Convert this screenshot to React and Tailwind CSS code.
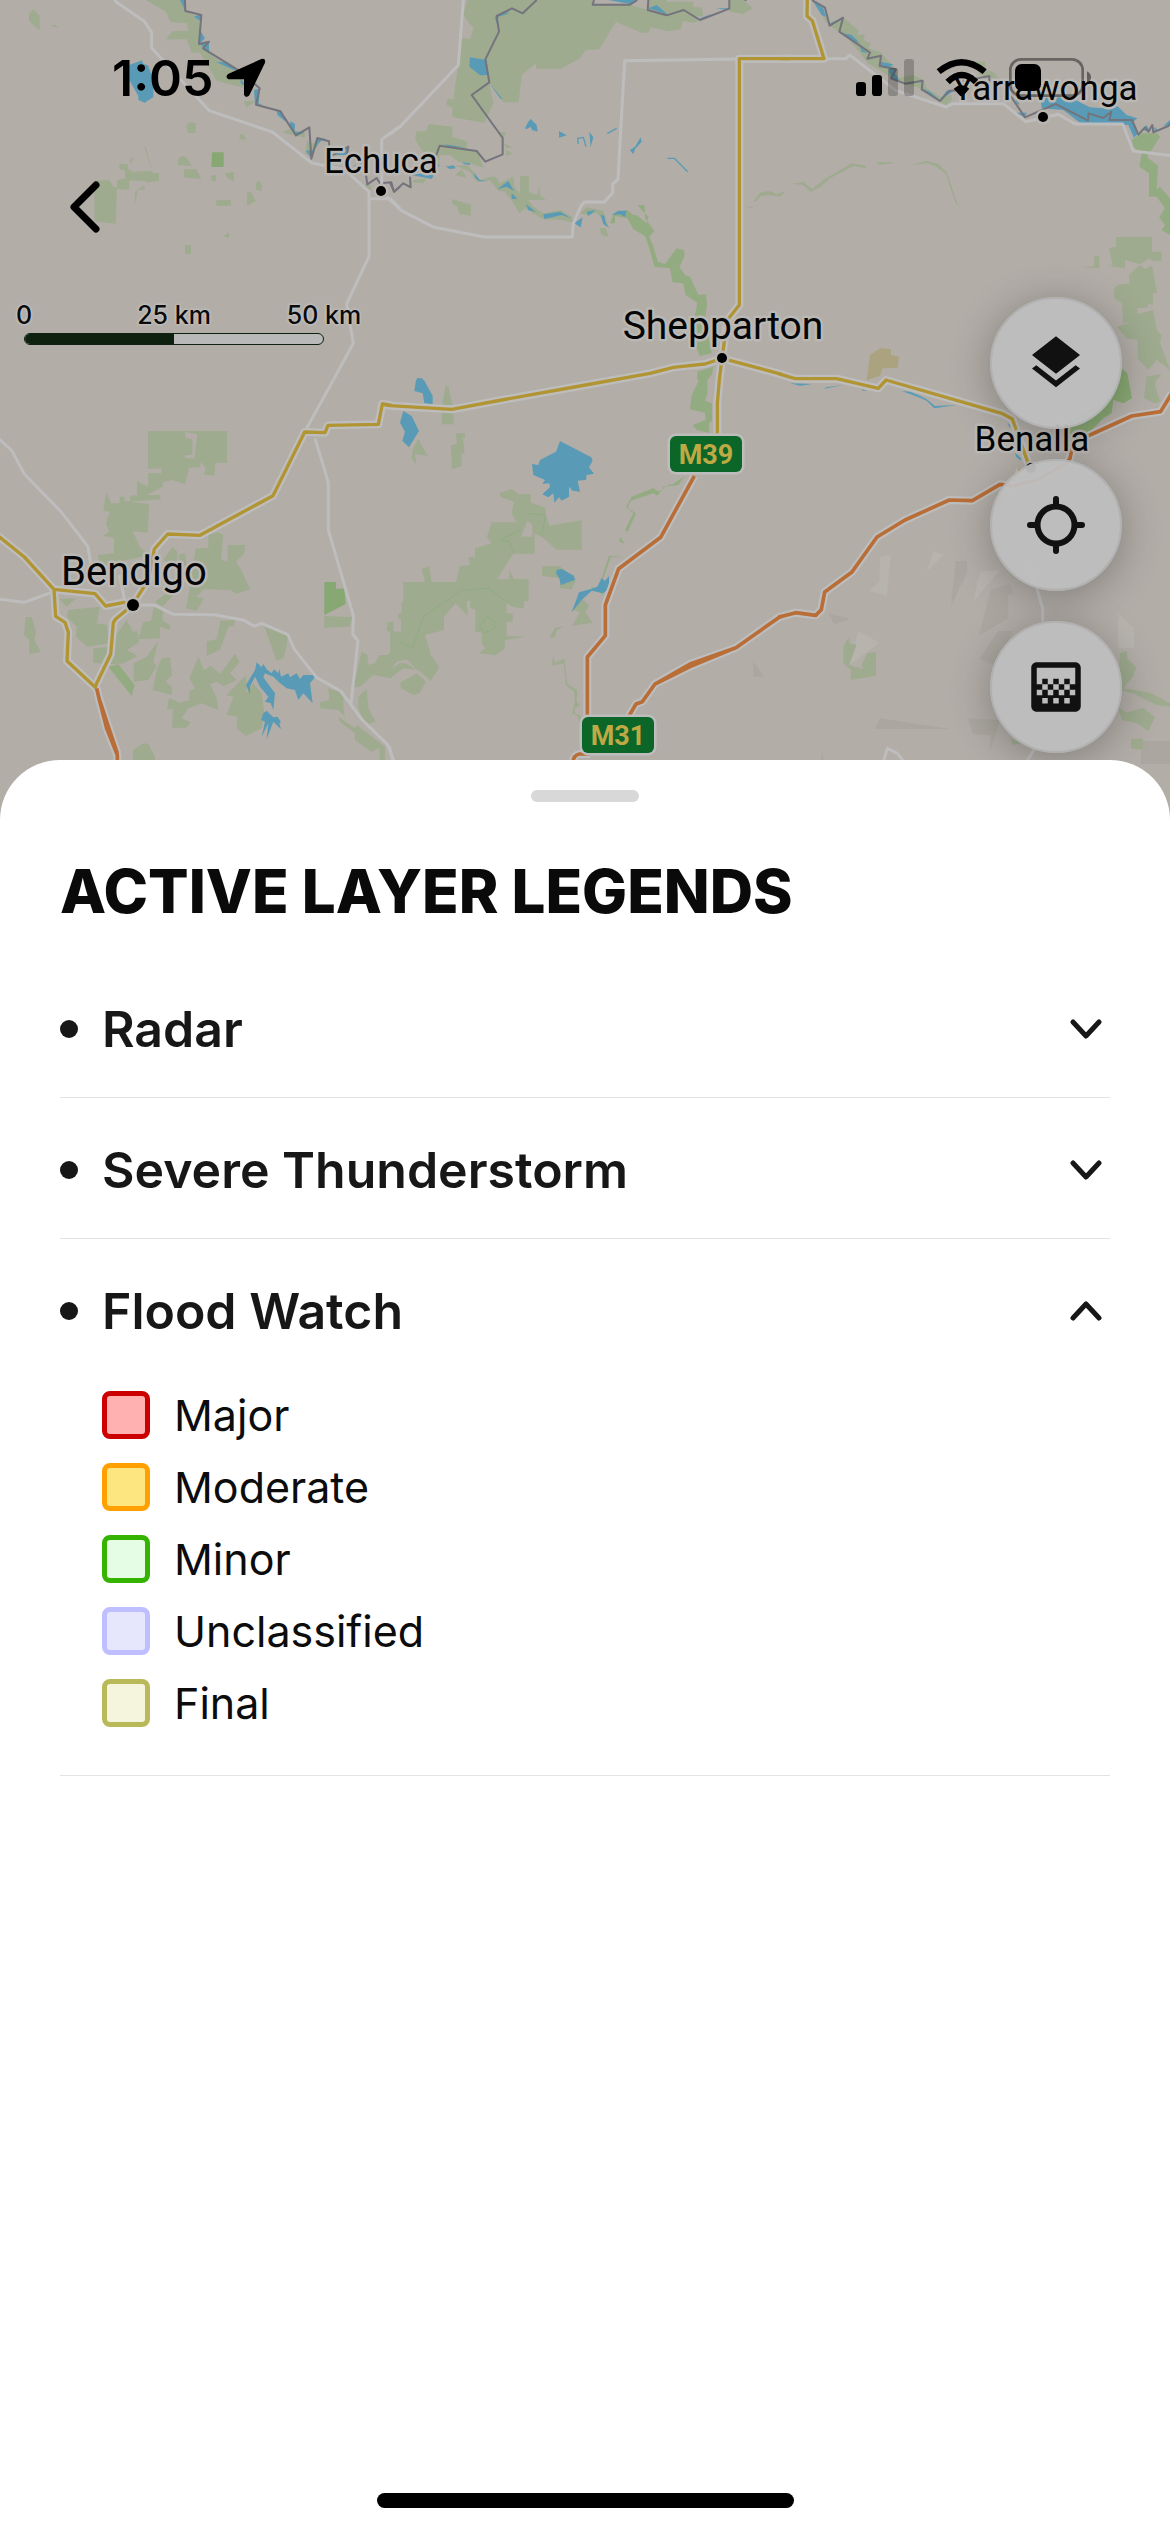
import { useState } from "react";
import { MdLayers, MdGradient } from "react-icons/md";

// Each tile is drawn on its own grid, three units to one map pixel.
const TILES = [
  {
    x: 0, y: 0,
    green: "M438 0L498 35L512 67L560 70L566 92L520 93L497 118L560 118L575 157L600 158L650 242L730 263L730 225L690 200L640 170L600 130L598 50L555 35L550 0ZM100 27L88 40L87 62L119 91L119 48ZM153 77L165 74L176 83ZM558 378L569 367L587 370V398L565 399ZM719 404L727 401L740 419L719 418ZM534 476L545 468L560 473L576 497L534 496ZM552 507L590 508L603 537L552 532ZM634 527L648 525V543H634ZM675 520L702 515V543L682 535ZM768 548L777 542L785 555V574L768 569ZM741 577L753 575L767 604L741 618ZM649 600H693V617H649ZM669 709L687 696V713ZM555 735H573V762H555ZM282 541H328L340 560L351 563L347 671L284 664ZM351 540L375 535L374 510L358 508V492L383 493L384 508L396 511L393 517L430 514L456 514L433 440L437 440L458 518L477 520V543L438 548L436 543L388 541L387 569L351 568ZM388 480L398 470L396 494ZM404 577L412 570L434 555V567L412 571L407 613ZM732 303L765 304L740 323ZM849 398L862 388L915 399V413ZM930 430L922 420L915 460L935 470L960 425ZM1090 560L1105 545L1115 565L1105 575Z",
    dark: "M636 457H671V501H634Z",
    water: "M388 195L426 181L430 192L444 196L460 240V291L434 308L415 300V288L388 240ZM540 0L555 0V30ZM582 50L602 42L600 62ZM598 88L615 115L600 130ZM600 132L627 125V155L612 145ZM648 186L680 187L715 215L690 205ZM722 235L740 262L722 250ZM762 270L780 265L776 310L788 314L765 314ZM830 328L845 333L858 365L832 345ZM872 364L885 372L884 395L915 395L905 402L885 404L868 380ZM930 470L918 452L940 450L950 415L975 415L955 430ZM1000 465L1045 445L1040 465ZM1060 497L1090 488L1075 502Z",
    border: "M555 0L556 33L604 45L597 132L627 125L609 145L722 215L779 265L768 314L841 334L888 406L928 382L934 476L952 414L987 424L990 470L1045 440L1035 500M1098 525L1102 553L1130 534L1140 550L1174 547L1182 575L1200 560",
    road: "M343 0L354 10L432 63L455 97V144L628 332L817 396L934 488L1035 510L1107 575V769L1040 912L1060 1030L1000 1140M1107 596H1170L1200 625M1145 560V419L1200 378",
  },
  {
    x: 390, y: 0,
    green: "M232 0H440L398 40L366 25L320 48L327 95L286 178L297 245L310 310L283 368L187 352V325L168 312L175 295L190 300L215 115L240 117L250 85L220 45ZM440 0H608V14H720L773 30L830 46L881 30L930 60L912 68L877 63L873 88L835 94L783 82L775 98H754L678 65L628 148L586 151L570 175L512 206H438V190L395 225L386 307H340L297 247L286 178L327 95L320 48L366 25L398 40ZM773 0H830V5H910V22H935L940 48L910 50L881 30L830 46L773 30ZM1018 0H1060L1088 25L1060 42L1020 35ZM118 372L187 380L186 410L233 425L230 447L262 453L280 503L240 490L205 485L180 465L150 465L145 500L95 450L76 420L78 395L108 393ZM324 395L348 397L340 420ZM340 430L366 440L350 445ZM348 450L367 460L348 469ZM196 525L215 508L230 535ZM187 597L243 614V647L208 642L202 620L185 610ZM70 540L110 535L100 550L70 548ZM145 500L230 495L255 520L265 543L300 530H316L330 550L370 530L372 560L390 580V528H417V577L440 585L450 562V585L467 600H415L430 620L460 640L510 630L545 650L553 670L520 660L460 658L405 625L388 640L365 600L345 575L325 572L300 540L260 545L240 515L205 500ZM570 640L590 622L640 632L655 680L640 660L620 638L590 645ZM628 685L648 685L655 710L635 705ZM1090 605L1110 578L1138 572L1160 583L1187 574L1170 590L1140 585L1112 588L1100 604ZM1065 618L1088 622V627Z",
    mid: "M660 670L672 640L712 630L730 645L740 645L770 670L775 650L742 616H764L765 655L793 692L778 710L790 740L803 785L825 792L860 745L882 750L884 768L868 800L885 825L900 830L925 885L948 883L951 915L945 955L965 1060L930 1068L920 1045L915 945L922 908L887 885L880 850L848 847L840 805L793 800L780 750L765 708L730 688L712 655L675 648V670ZM922 1115L970 1100L965 1125L950 1140H922Z",
    water: "M240 172L290 180L296 225L270 226L238 200ZM298 250L338 298L330 295ZM320 48L357 35L352 42L325 50L322 75L314 52ZM405 385L415 365L422 357L440 375L443 395L428 390L434 405L422 380L410 388ZM507 393L530 406L507 413ZM598 395L610 412L602 442ZM752 412L755 425L735 447L730 463L720 450L735 440ZM160 432L230 443L180 440ZM168 500L190 496L197 505L180 507ZM215 487L240 490V495L222 492ZM252 518L270 540L293 544H268L255 533ZM322 568L355 543L372 573L350 560ZM365 580L382 597H365ZM408 612L438 636L415 630ZM460 643L510 635L543 655L515 645L463 657ZM553 670L578 652L572 682ZM590 635L617 630L595 648ZM632 643L643 648L647 668L658 684L640 672ZM665 645L685 632L710 632L705 650L690 643ZM775 25L800 15L835 45L800 32ZM930 55L965 42L935 60ZM975 25H1018L1015 30ZM655 0H740L720 12ZM80 1135H98V1142H80ZM65 525L100 520L150 492L125 537Z",
    stream: "M565 432L563 415L580 412L588 440M652 400L680 385M832 475H853L893 515",
    border: "M440 0L398 40L366 25L320 48L327 95L286 178L298 247L245 285L338 414V463L286 485L260 453L149 437L130 490M60 530L62 562L40 550L12 575L0 548M612 0L608 14H720L742 0M775 0L773 30L830 46L881 30L930 60L1018 26V0M1058 -4L1070 1",
    road: "M220 0L205 195L30 380L0 403M-10 590L0 600L33 631L132 682L283 711H547L550 670L573 618L583 606H643L668 578V552L684 538L704 182L1048 177",
    yellow: "M1200 176H1048V915L1012 960L996 1075",
  },
  {
    x: 780, y: 0,
    green: "M95 0L130 40L150 70L190 52L236 92L232 105L255 103L250 120L272 130L265 145L300 155L345 205L355 235L400 225L430 240L440 265L480 290L515 285V300L498 315L470 300L420 265L375 250L330 230L265 190L200 110L145 75ZM580 185H615V210L640 215L660 240L600 225ZM36 551L70 547L97 567L130 540L215 490L258 497V505L220 498L150 535L122 560L92 576L70 555ZM292 487L340 486V490L295 495ZM390 495L440 483L475 492L500 517L510 545L532 612L557 628L528 612L505 545L500 525L470 500L445 490ZM0 580L16 573L0 587ZM1008 711H1116V755H1145V782H1115L1110 775L1080 793L1035 780V805L988 798L998 795L987 743L1008 742ZM1046 825L1080 795L1095 808L1116 797L1131 878L1118 880L1120 915L1103 912L1105 922L1070 925L1073 942L1120 930L1130 990L1145 1005L1140 1030L1170 1110L1130 1080L1105 1110L1073 1075V1020L1040 1015L1010 980L1060 965L1030 970L1026 910L1003 895V865L1013 855L1050 850ZM909 803L943 798L942 770L958 766V804ZM1100 1130L1145 1122L1130 1140H1100Z",
    mid: "M1056 420L1085 400L1130 400L1140 410L1115 450L1102 460L1104 475L1134 497L1130 570L1140 560L1170 595V705L1145 690L1155 675L1138 652L1155 625L1130 590H1107V520L1078 500L1085 460L1060 440Z",
    olive: "M270 1065L300 1045L333 1047V1065L357 1070L353 1104L308 1105L300 1128L260 1140Z",
    water: "M782 295L870 290L905 310L930 322L970 325L1012 318L1040 345L1072 355L1060 365L1075 400L1062 413L1045 375L900 368L850 330L785 325ZM97 0L130 25L138 50L125 45ZM145 72L185 55L160 70ZM190 100L215 105L240 130L215 120ZM240 140L262 160L245 155ZM300 185L340 193L330 200L350 208L345 220L358 242L335 235L325 205L300 195ZM425 265L450 275L480 300L465 297ZM480 300L500 272L525 270ZM700 285L720 315L712 312ZM708 338H740L735 352ZM1085 390L1100 375L1110 395ZM1125 380L1132 390L1122 392ZM1150 378L1170 360V375Z",
    border: "M95 0L135 23L149 77L189 53L178 95L270 158L262 176L303 167L299 198L348 208L333 235L375 251L428 242L425 268L480 303L508 272L545 270M545 245L628 228V245M690 285L735 352L827 312L924 362L926 340L970 354L994 335L988 360L1056 360L1075 404L1095 382L1105 395L1117 375L1120 397L1165 378L1175 365",
    road: "M132 176H198L209 165L348 272L498 321L520 311H670L737 365L835 343L886 372H1028L1060 453L1175 467",
    yellow: "M82 -5L81 48L97 62L132 176H0",
  },
  {
    x: 0, y: 380,
    green: "M444 153H681V248L695 247L646 250L643 287L612 284L618 263L601 247V261L568 263L555 312L518 300L488 306V320L440 345L481 345L481 358L390 365L447 372L443 458L398 454L410 480L422 505L450 525L380 540L300 560L293 525L342 520V475L310 467L328 455L318 430L330 395L310 392L319 337L333 370H358L360 350H374V364H390V348L411 345V303L444 320V280H485V265L444 266ZM587 506L625 503V465L655 457L670 464L663 540L683 545V496L735 495L733 520L708 545L718 560L751 628L710 641L692 630L610 628L590 650L612 655L590 692L558 685L565 650ZM517 500L532 515L530 560L490 540ZM465 665L505 635L520 645L487 680ZM462 680L488 690V722L512 737L508 750L480 740V775L415 777L430 727L453 722ZM662 722L705 720L702 737L685 740L660 810L620 827V784L650 778ZM793 740L864 764L860 795L852 832L830 843ZM178 657L228 655L200 680ZM205 690L300 680L290 730L320 735L330 790L262 800L228 770L230 740L200 710ZM380 720L400 755L412 753L417 787L380 810L413 828L370 850L330 853L280 848V805L330 800L345 770ZM474 783L460 845L470 858L445 900L401 905V850L440 830ZM485 835L510 832L516 885L497 905L515 920L516 945L458 930L470 870ZM77 710L95 712L108 755L103 780L122 815L88 822V780L72 765ZM595 830L612 870L632 858L660 882L705 822L719 847L690 880L710 900L673 918L650 905L630 912L650 955L655 990L605 970L565 985L545 1015L572 1027L560 1043H517L518 988L501 988L507 955L540 968L568 960V935L585 925L568 895ZM738 885L740 940L760 910L785 940L793 1000L785 1045L737 1068L710 1045L712 1010L680 1005L700 950L680 945ZM973 708L1056 712L1048 740L973 743ZM1085 815L1103 825V855L1125 850L1138 825H1165L1178 800V755L1160 753L1163 725L1180 728V755H1200V865L1172 895L1120 885L1080 920L1060 922ZM985 925L1030 940V985L1035 1010L1015 990L960 985V967L988 960ZM1100 927L1105 985L1127 1025L1095 1035L1075 985V950ZM1015 1010L1065 1045L1070 1035L1155 1100V1140H1140L1138 1105L1115 1115L1065 1080V1060L1020 1025ZM430 1090L445 1092L465 1130V1140H399V1110ZM535 525L555 520L560 560L540 550Z",
    mid: "M325 860L355 853L404 915L395 948Z",
    dark: "M973 606H1008V626H1033L1037 672L973 705Z",
    land: "M555 155L592 163L583 236L555 234V226L577 224V178L557 175Z",
    water: "M770 847L785 862L790 852L800 868L815 880L822 868L835 880L838 866L843 890L865 880L870 892L890 880L900 897L910 885L950 885L930 910L938 970L910 940L895 960L885 930L860 925L835 905L820 890L795 880L790 892L825 940L820 990L812 970L795 965L805 950L780 920L765 890L750 920L750 943L738 915L765 870ZM790 1000L800 992L820 1012L832 1010L843 1025L838 1030L843 1048L820 1025L800 1078L805 1030L785 1070L795 1025L783 1020Z",
    road: "M1000 0L920 145M945 175L985 308V450L1061 710L1058 762L1074 783L1053 970M-5 175L35 211L73 282L183 395L264 500L275 570M-5 657L72 667L162 635M398 674L465 676L520 703L643 704L732 721L762 738L785 730L864 764L882 806L950 893L1022 933L1087 1020L1162 1093L1182 1145M375 665L358 585",
    yellow: "M-5 468L73 531L162 628L285 641L317 678L372 667L398 674L347 717L340 728L332 823L290 910L286 922L201 843L205 757L195 727L167 709L162 628M398 674L445 600L463 507L503 462L600 466L819 347L914 156L975 158L984 136L1135 133L1147 72L1175 76",
    orange: "M290 925L297 955L320 1045L352 1125V1150M297 955L325 1040L352 1120",
  },
  {
    x: 390, y: 380,
    green: "M167 17L175 18L186 70L192 133H156V75ZM85 178L113 227L75 222L80 255L65 235L70 205ZM198 160H225V172H218L224 218L215 222V258L186 268L183 195L200 192ZM328 340L365 327L385 343H422V368L467 383V405L478 437L575 421V509H500L458 472L434 460V521H397L370 521L322 597H416V664H402V685L380 683L350 668V700H368V725H350V768L404 770L345 780V805L318 826L266 820L285 805L275 790V758L256 755V690L240 683V662H230L233 707L197 670L162 710V750L105 765L123 825L148 862L122 902L85 870L40 865L0 895V725H10V755H33V718H25V700H35V665H40V606H198L210 558L240 556L235 532H255V505L305 490L291 470L305 427H380L365 400L372 365L332 350ZM95 567L117 558L125 606H105ZM30 908L82 880L108 905L90 938L70 945L33 925ZM358 570L372 597H358ZM456 559H510L558 598L545 628L510 625L512 595L456 588ZM575 655L598 678L585 695L608 728L547 737L570 695L545 690ZM600 620L640 630V645ZM477 773L495 745L520 738L500 752L495 772ZM485 857L490 828L495 848L523 836L532 912L562 930L560 965L570 975L555 985V1000L573 1008L568 1040L565 1010L547 1000L555 960L552 935L528 915L521 850Z",
    mid: "M657 528L706 532L662 532L640 595L636 592ZM708 382L725 350L790 324L805 335L835 315L850 312L885 288L865 315L820 320L803 347L790 340L722 362L712 385L738 400L713 455L705 450L730 400ZM690 470L705 492L688 485ZM932 -10H952V40L945 62L966 70V123L957 130V158L920 150L908 135L947 120L945 98L900 88L905 45Z",
    land: "M412 422L427 435V470H393ZM0 870L20 845L50 838L82 870L48 850L28 850Z",
    edge: "M28 785L68 803L100 710L215 630L295 625L370 680M328 480L390 452M330 480L357 485L372 520M410 400L467 405L455 470M268 740L292 710L315 725V745L285 758Z",
    water: "M510 183L604 232L608 242L597 262L612 281L590 285L588 300L563 302L570 335L548 332L537 320V350L515 362L507 352L493 368L490 340L475 352L457 343L480 322L478 310L457 312L465 300L430 285L426 252L445 255L450 240L498 215ZM78 0H102L128 48V72L103 70L98 40L73 33ZM40 93L65 108L87 153L57 202L37 182L45 155L30 128ZM500 570L515 567L552 587L555 600L512 615L508 595L498 580ZM545 697L567 637L600 628L622 620L635 593L645 603L657 588V625L640 640L605 632L575 660Z",
    hill: "M1090 845L1122 890H1090Z",
    road: "M-2 1100L10 1145",
    yellow: "M-25 72L0 77L185 88L335 60L570 18L780 -20L850 -38L945 -48L996 -65L988 0L982 70V160M996 -65L1175 -17",
    orange: "M913 288L812 472L686 566L646 675V767L592 831V1040M1175 710L1170 710L1038 803L900 860L795 912L757 965L738 972L710 1020M1038 803L900 852L795 912M548 1150Q550 1125 568 1122H600",
  },
  {
    x: 780, y: 380,
    hill: "M527 543H561V580L512 680ZM632 630L690 612L700 640L685 645V715L597 768ZM145 700L210 717L163 733ZM300 1015L510 1047H284ZM563 1015L660 1020L630 1115L632 1065L580 1063ZM655 753L700 753L645 855L597 838ZM1083 1083H1175V1152H1083ZM127 1105L130 1140H123Z",
    light: "M300 530L333 525L320 647L266 632L298 605ZM460 512L490 525L440 575ZM235 753L298 788L208 855ZM1015 700L1062 745V805H1013ZM600 575L660 570L580 665Z",
    green: "M205 773L212 793L230 793L208 855L250 868L245 855L262 820L288 817V887L212 900L213 870L190 850V800ZM1020 820L1040 812L1042 835L1068 862L1060 888L1030 925L1110 938L1170 970V980L1130 975L1060 940L1015 930ZM1013 980L1040 998L1090 983L1125 1012L1105 1053L1070 1030L1027 1020ZM1053 1078L1089 1075V1110L1053 1105ZM1100 -10H1130L1125 15L1140 65L1125 70L1092 55ZM648 340L670 335L660 400ZM645 835L670 800L680 830ZM690 1075L720 1090L700 1095Z",
    dark: "M1020 -40L1042 -20L1056 55L1030 70L1000 60L995 100L970 115L920 165L860 180L840 140L980 60Z",
    water: "M30 10L97 12L60 17ZM130 27L190 15L140 22ZM245 28L260 32L250 33ZM365 33L390 35L415 45L440 58L465 78L530 75L463 85L440 62L412 50ZM705 218L723 235V242L708 230ZM683 130L692 135L690 145ZM915 128L925 120L922 128Z",
    road: "M750 555L788 685V725M310 1145L322 1105L352 1120L372 1145M765 1105L740 1145",
    yellow: "M-5 -19L45 -4H170L295 25L318 0L665 100L697 117L750 265M715 290L720 268",
    orange: "M-5 712L47 698L107 706L124 689L134 636L215 577L291 471L375 420L508 360L577 362L660 313L700 318L770 300L860 250L870 235L878 195L930 165L1055 108L1142 95L1175 40",
  },
];

const fillLayers = [
  ["light", "#b7b3ad"],
  ["hill", "#aba7a0"],
  ["green", "#9eab8f"],
  ["mid", "#93ab80"],
  ["dark", "#88a873"],
  ["olive", "#aba380"],
  ["land", "#b2ada7"],
  ["water", "#599bb6"],
];

function Lines({ layer, color, width }) {
  return TILES.filter((t) => t[layer]).map((t) => (
    <path
      key={`${t.x}-${t.y}`}
      d={t[layer]}
      transform={`translate(${t.x} ${t.y}) scale(0.33333)`}
      fill="none"
      stroke={color}
      strokeWidth={width}
      strokeLinejoin="round"
    />
  ));
}

const TOWNS = [
  { name: "Echuca", x: 381, y: 173, size: 35, dot: [381, 191, 5] },
  { name: "Shepparton", x: 723, y: 339, size: 39, dot: [722, 358, 5] },
  { name: "Benalla", x: 1032, y: 451, size: 35, dot: [1031, 468, 5] },
  { name: "Bendigo", x: 134, y: 585, size: 40, dot: [133, 605, 6] },
  { name: "Yarrawonga", x: 1045, y: 100, size: 35, dot: [1043, 117, 5] },
];

const SHIELDS = [
  { name: "M39", x: 670, y: 436 },
  { name: "M31", x: 582, y: 717 },
];

function MapCanvas() {
  return (
    <svg
      className="absolute inset-0 h-full w-full font-['Roboto',sans-serif]"
      viewBox="0 0 1170 820"
      preserveAspectRatio="xMidYMin slice"
      role="img"
      aria-label="Map of northern Victoria"
    >
      {fillLayers.map(([layer, color]) =>
        TILES.filter((t) => t[layer]).map((t) => (
          <path
            key={`${layer}-${t.x}-${t.y}`}
            d={t[layer]}
            transform={`translate(${t.x} ${t.y}) scale(0.33333)`}
            fill={color}
          />
        ))
      )}
      <Lines layer="edge" color="#8fac80" width={3} />
      <Lines layer="stream" color="#599bb6" width={4} />
      <Lines layer="border" color="#74747d" width={6} />
      <Lines layer="road" color="#bebdbd" width={9} />
      <Lines layer="yellow" color="#bebdbd" width={24} />
      <Lines layer="orange" color="#bebdbd" width={24} />
      <Lines layer="yellow" color="#b29533" width={10} />
      <Lines layer="orange" color="#b96d37" width={11} />
      {TOWNS.map((t) => (
        <g key={t.name}>
          <circle cx={t.dot[0]} cy={t.dot[1]} r={t.dot[2]} fill="#000" stroke="#b9b6b2" strokeWidth="5" paintOrder="stroke" />
          <text
            x={t.x}
            y={t.y}
            fontSize={t.size}
            textAnchor="middle"
            fill="#050505"
            stroke="#bab8b5"
            strokeWidth="5"
            strokeLinejoin="round"
            paintOrder="stroke"
          >
            {t.name}
          </text>
        </g>
      ))}
      {SHIELDS.map((s) => (
        <g key={s.name}>
          <rect x={s.x} y={s.y} width="72" height="36" rx="6" fill="#0c6628" stroke="#bebdbd" strokeWidth="5" paintOrder="stroke" />
          <text x={s.x + 36} y={s.y + 28} fontSize="27" fontWeight="700" textAnchor="middle" fill="#bfa945">
            {s.name}
          </text>
        </g>
      ))}
    </svg>
  );
}

function StatusBar() {
  return (
    <div className="flex h-[38px] items-center justify-between pl-[112px] pr-[78px] text-black">
      <div className="flex items-center gap-3">
        <time className="text-[50px] font-semibold leading-[38px]">1:05</time>
        <svg className="h-10 w-10" viewBox="0 0 120 120" aria-hidden="true">
          <path d="M106 3Q120 0 117 14L70 112Q60 122 54 110V64H8Q-4 58 6 48Z" fill="#000" />
        </svg>
      </div>
      <svg className="h-[40px] w-[236px]" viewBox="228 174 708 120" aria-hidden="true">
        <rect x="228" y="246" width="30" height="42" rx="10" />
        <rect x="276" y="225" width="30" height="63" rx="10" />
        <rect x="324" y="204" width="30" height="84" rx="10" opacity="0.22" />
        <rect x="372" y="177" width="30" height="111" rx="10" opacity="0.22" />
        <path d="M476 215Q545 158 614 215" fill="none" stroke="#000" strokeWidth="19" />
        <path d="M503 246Q545 204 588 246" fill="none" stroke="#000" strokeWidth="19" />
        <path d="M521 266Q545 246 568 266L550 287Q545 291 540 287Z" />
        <rect x="691" y="178" width="217" height="109" rx="32" fill="none" stroke="#000" strokeOpacity="0.42" strokeWidth="8" />
        <rect x="705" y="192" width="78" height="81" rx="20" />
        <path d="M921 214Q933 220 933 232Q933 244 921 250Z" opacity="0.45" />
      </svg>
    </div>
  );
}

function ScaleBar() {
  return (
    <div>
      <div className="-ml-[51px] grid w-[450px] grid-cols-3 text-center text-[25px] font-medium leading-9 text-[#0a0a0a] [text-shadow:0_0_3px_#c4c4c6,0_0_3px_#c4c4c6,0_0_3px_#c4c4c6]">
        <span>0</span>
        <span>25 km</span>
        <span>50 km</span>
      </div>
      <div className="ml-6 h-3 w-[300px] overflow-hidden rounded-full border border-[#0e210f] bg-[#b9b9b9]">
        <div className="h-full w-1/2 bg-[#0e210f]" />
      </div>
    </div>
  );
}

function Crosshair() {
  return (
    <svg className="h-[60px] w-[60px]" viewBox="0 0 60 60" fill="none" stroke="#111" strokeWidth="6" strokeLinecap="round" aria-hidden="true">
      <circle cx="30" cy="30" r="18.5" />
      <path d="M30 4v6M30 50v6M4 30h6M50 30h6" />
    </svg>
  );
}

function MapButton({ label, children }) {
  return (
    <button
      type="button"
      aria-label={label}
      className="flex h-[132px] w-[132px] items-center justify-center rounded-full border-2 border-[#b1b1b2] bg-[#bebebe]/95 text-[#111] shadow-[0_6px_40px_rgba(0,0,0,0.28)]"
    >
      {children}
    </button>
  );
}

const FLOOD = [
  { label: "Major", swatch: "border-[#cc0000] bg-[#ffb0b0]" },
  { label: "Moderate", swatch: "border-[#ffa000] bg-[#fde580]" },
  { label: "Minor", swatch: "border-[#34b400] bg-[#e5fde5]" },
  { label: "Unclassified", swatch: "border-[#bfbfff] bg-[#e6e6fd]" },
  { label: "Final", swatch: "border-[#b9b959] bg-[#f5f5dd]" },
];

const LAYERS = [
  { id: "radar", name: "Radar", items: [] },
  { id: "storm", name: "Severe Thunderstorm", items: [] },
  { id: "flood", name: "Flood Watch", items: FLOOD },
];

function LayerLegend({ layer, open, onToggle }) {
  return (
    <li className="border-b border-[#e3e3e3]">
      <button
        type="button"
        aria-expanded={open}
        onClick={onToggle}
        className="flex h-[140px] w-full items-center gap-6 pr-2 pt-1 text-left text-[#171717]"
      >
        <span className="h-[18px] w-[18px] rounded-full bg-[#171717]" />
        <span className="flex-1 text-[50px] font-semibold leading-[60px]">{layer.name}</span>
        <svg className="h-5 w-8" viewBox="0 0 32 20" fill="none" stroke="#171717" strokeWidth="5" strokeLinecap="round" strokeLinejoin="round" aria-hidden="true">
          <path d={open ? "M3 17L16 3L29 17" : "M3 3L16 17L29 3"} />
        </svg>
      </button>
      {open && layer.items.length > 0 && (
        <ul className="flex flex-col gap-6 pb-12 pl-[42px] pt-3">
          {layer.items.map((item) => (
            <li key={item.label} className="flex h-12 items-center gap-6">
              <span className={`h-12 w-12 rounded-lg border-[5px] ${item.swatch}`} />
              <span className="text-[43px] leading-[48px] text-[#0c0c0c]">{item.label}</span>
            </li>
          ))}
        </ul>
      )}
    </li>
  );
}

export default function App() {
  const [openId, setOpenId] = useState("flood");
  return (
    <div className="flex min-h-screen flex-col bg-[#b2ada7] font-['Inter',sans-serif]">
      <header className="relative h-[820px] overflow-hidden">
        <MapCanvas />
        <div className="relative pt-[59px]">
          <StatusBar />
          <button type="button" aria-label="Back" className="ml-10 mt-[65px] flex h-[90px] w-[90px] items-center justify-center">
            <svg className="h-[54px] w-8" viewBox="0 0 32 54" fill="none" stroke="#000" strokeWidth="7" strokeLinecap="round" strokeLinejoin="round" aria-hidden="true">
              <path d="M27 5L5 27L27 49" />
            </svg>
          </button>
          <div className="mt-[45px] flex items-start justify-between pr-12">
            <ScaleBar />
            <div className="flex flex-col gap-[30px]">
              <MapButton label="Layers"><MdLayers size={64} /></MapButton>
              <MapButton label="Locate me"><Crosshair /></MapButton>
              <MapButton label="Opacity"><MdGradient size={66} /></MapButton>
            </div>
          </div>
        </div>
      </header>
      <main className="relative -mt-[60px] flex flex-1 flex-col rounded-t-[60px] bg-white px-[60px]">
        <div className="mx-auto mt-[30px] h-3 w-[108px] rounded-full bg-[#d8d8d8]" />
        <h1 className="mt-[53px] text-[60px] font-extrabold leading-[72px] text-[#0a0a0a]">ACTIVE LAYER LEGENDS</h1>
        <ul className="mt-[30px]">
          {LAYERS.map((layer) => (
            <LayerLegend
              key={layer.id}
              layer={layer}
              open={openId === layer.id}
              onToggle={() => setOpenId(openId === layer.id ? null : layer.id)}
            />
          ))}
        </ul>
        <div className="mx-auto mb-6 mt-auto h-[15px] w-[417px] rounded-full bg-black" />
      </main>
    </div>
  );
}
